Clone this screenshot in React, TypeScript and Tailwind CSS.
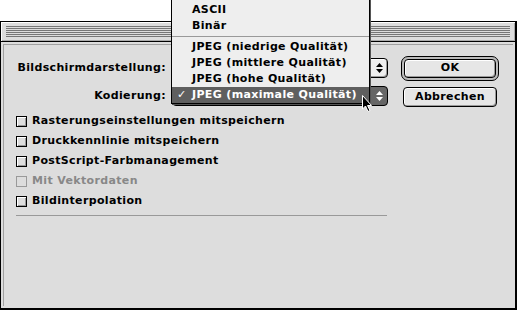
import React from "react";

const options = [
  { label: "Rasterungseinstellungen mitspeichern", disabled: false },
  { label: "Druckkennlinie mitspeichern", disabled: false },
  { label: "PostScript-Farbmanagement", disabled: false },
  { label: "Mit Vektordaten", disabled: true },
  { label: "Bildinterpolation", disabled: false },
];

function Arrows({ light }: { light?: boolean }) {
  const fill = light ? "#ffffff" : "#000000";
  return (
    <svg width="7" height="10" viewBox="0 0 7 10">
      <path d="M3.5 0 L7 4 L0 4 Z" fill={fill} />
      <path d="M0 6 L7 6 L3.5 10 Z" fill={fill} />
    </svg>
  );
}

function Popup({ pressed }: { pressed?: boolean }) {
  return (
    <div
      className={`ml-[6px] flex h-[20px] w-[216px] rounded-[4px] border border-black ${
        pressed ? "bg-[#666666]" : "bg-[#eeeeee] shadow-[inset_1px_1px_0_#ffffff,inset_-1px_-1px_0_#999999]"
      }`}
    >
      <div className="flex-1" />
      <div className="flex w-[17px] items-center justify-center border-l border-black">
        <Arrows light={pressed} />
      </div>
    </div>
  );
}

function Checkbox({ label, disabled }: { label: string; disabled: boolean }) {
  return (
    <div className="flex h-[20px] items-center">
      <div
        className={`h-[11px] w-[11px] border ${
          disabled
            ? "border-[#999999] bg-[#dddddd]"
            : "border-black bg-[#dddddd] shadow-[inset_1px_1px_0_#ffffff,inset_-1px_-1px_0_#999999]"
        }`}
      />
      <span className={`ml-[5px] ${disabled ? "text-[#888888]" : "text-black"}`}>{label}</span>
    </div>
  );
}

export default function App() {
  return (
    <div className="relative h-[310px] w-[517px] overflow-hidden bg-white font-['DejaVu_Sans',sans-serif] text-[11px] font-bold tracking-[0.35px] text-black">
      {/* dialog window */}
      <div className="mt-[21px] flex h-[289px] w-[517px] flex-col border border-b-2 border-r-2 border-black bg-[#dddddd]">
        <div className="flex h-[20px] flex-col justify-center border-b border-black px-[5px] shadow-[inset_1px_1px_0_#ffffff,inset_-1px_-1px_0_#aaaaaa]">
          <div className="flex flex-col gap-[1px]">
            <div className="h-[1px] bg-[#777777]" />
            <div className="h-[1px] bg-[#777777]" />
            <div className="h-[1px] bg-[#777777]" />
            <div className="h-[1px] bg-[#777777]" />
            <div className="h-[1px] bg-[#777777]" />
            <div className="h-[1px] bg-[#777777]" />
          </div>
        </div>

        <div className="m-[2px] flex flex-1 items-start border-l border-t border-[#a0a0a0] pl-[12px] pr-[10px] pt-[13px]">
          <div className="flex flex-col">
            <div className="flex h-[20px] items-center">
              <span className="w-[150px] text-right">Bildschirmdarstellung:</span>
              <Popup />
            </div>
            <div className="mt-[8px] flex h-[20px] items-center">
              <span className="w-[150px] text-right">Kodierung:</span>
              <Popup pressed />
            </div>
            <div className="mt-[5px] flex flex-col">
              {options.map((o) => (
                <Checkbox key={o.label} label={o.label} disabled={o.disabled} />
              ))}
            </div>
            <div className="mt-[4px] h-[1px] w-[371px] bg-[#999999]" />
          </div>

          <div className="ml-[13px] mt-[-2px] flex flex-col items-center">
            <div className="rounded-[7px] border border-black bg-[#bbbbbb] p-[2px]">
              <div className="flex h-[19px] w-[92px] items-center justify-center rounded-[4px] border border-black bg-[#e6e6e6] shadow-[inset_1px_1px_0_#ffffff,inset_-1px_-1px_0_#999999]">
                OK
              </div>
            </div>
            <div className="mt-[6px] flex h-[20px] w-[94px] items-center justify-center rounded-[4px] border border-black bg-[#e6e6e6] shadow-[inset_1px_1px_0_#ffffff,inset_-1px_-1px_0_#999999]">
              Abbrechen
            </div>
          </div>
        </div>
      </div>

      {/* open popup menu */}
      <div className="absolute left-[171px] top-[-1px] flex w-[199px] flex-col border border-black bg-[#eeeeee] pt-[2px] shadow-[1px_1px_0_0_#555555]">
        <div className="flex h-[16px] items-center pl-[20px]">ASCII</div>
        <div className="flex h-[16px] items-center pl-[20px]">Binär</div>
        <div className="flex h-[5px] items-center">
          <div className="h-[1px] w-full bg-[#999999]" />
        </div>
        <div className="flex h-[16px] items-center pl-[20px]">JPEG (niedrige Qualität)</div>
        <div className="flex h-[16px] items-center pl-[20px]">JPEG (mittlere Qualität)</div>
        <div className="flex h-[16px] items-center pl-[20px]">JPEG (hohe Qualität)</div>
        <div className="flex h-[16px] items-center bg-[#5f5f5f] text-white">
          <span className="w-[20px] pl-[5px]">✓</span>
          JPEG (maximale Qualität)
        </div>
      </div>

      {/* mouse pointer */}
      <svg className="absolute left-[362px] top-[95px]" width="12" height="18" viewBox="0 0 12 18">
        <path
          d="M0.5 0.5 L0.5 14 L3.5 11 L6 16.5 L8 15.5 L5.5 10.5 L9.5 10.5 Z"
          fill="#000000"
          stroke="#ffffff"
          strokeWidth="1"
        />
      </svg>
    </div>
  );
}
